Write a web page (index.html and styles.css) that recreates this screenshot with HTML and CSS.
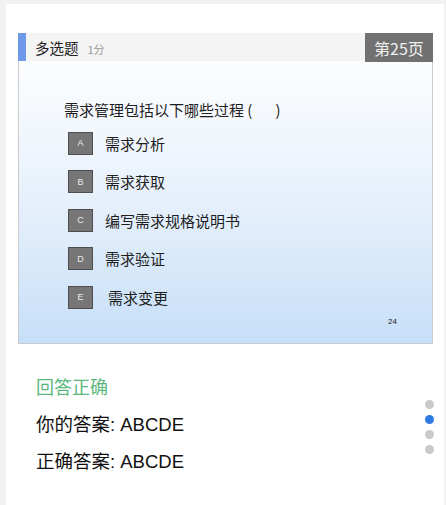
FILE: index.html
```html
<!DOCTYPE html>
<html lang="zh">
<head>
<meta charset="utf-8">
<link rel="stylesheet" href="styles.css">
</head>
<body>
<div class="card">
  <div class="slide">
    <div class="slide-head">
      <div class="head-title"><span class="type">多选题</span><span class="score">1分</span></div>
      <div class="page-badge">第25页</div>
    </div>
    <div class="slide-body">
      <div class="question">需求管理包括以下哪些过程 (<span class="blank"></span>)</div>
      <div class="options">
        <div class="option"><span class="letter">A</span><span class="opt-text">需求分析</span></div>
        <div class="option"><span class="letter">B</span><span class="opt-text">需求获取</span></div>
        <div class="option"><span class="letter">C</span><span class="opt-text">编写需求规格说明书</span></div>
        <div class="option"><span class="letter">D</span><span class="opt-text">需求验证</span></div>
        <div class="option"><span class="letter">E</span><span class="opt-text shift">需求变更</span></div>
      </div>
      <div class="slide-num">24</div>
    </div>
  </div>
  <div class="result">
    <div class="status">回答正确</div>
    <div class="answer">你的答案: ABCDE</div>
    <div class="answer second">正确答案: ABCDE</div>
  </div>
  <div class="dots">
    <span class="dot"></span>
    <span class="dot active"></span>
    <span class="dot"></span>
    <span class="dot"></span>
  </div>
</div>
</body>
</html>
```
FILE: styles.css
```css
html, body {
  margin: 0;
  padding: 0;
  height: 100%;
}
body {
  background: #f1f1f1;
  font-family: "Noto Sans CJK SC", "Liberation Sans", sans-serif;
  color: #1a1a1a;
  overflow: hidden;
}
.card {
  position: relative;
  background: #ffffff;
  margin: 4px 2px 0 6px;
  height: calc(100% - 4px);
  padding: 29px 11px 0 12px;
  box-sizing: border-box;
}
.slide {
  height: 311px;
  border: 1px solid #c9cbcf;
  box-sizing: border-box;
  display: flex;
  flex-direction: column;
  background: linear-gradient(to bottom, #ffffff 0%, #f5f9fd 25%, #e3eefb 60%, #c6dff8 100%);
}
.slide-head {
  height: 28px;
  display: flex;
  align-items: stretch;
  background: #f4f4f4;
  border-left: 8px solid #6e98e8;
  margin-left: -1px;
  margin-top: -1px;
  margin-right: -1px;
}
.head-title {
  flex: 1;
  display: flex;
  align-items: center;
  padding-left: 9px;
  gap: 9px;
}
.type {
  font-size: 14.5px;
  color: #222;
}
.score {
  font-size: 11px;
  color: #9a9a9a;
  padding-top: 3px;
}
.page-badge {
  width: 68px;
  background: #717171;
  color: #f0f0f0;
  font-size: 16px;
  display: flex;
  align-items: center;
  justify-content: center;
  height: 29px;
}
.slide-body {
  flex: 1;
  display: flex;
  flex-direction: column;
  padding: 39px 0 0 45px;
}
.question {
  font-size: 15px;
  line-height: 20px;
  color: #1e1e1e;
}
.blank {
  display: inline-block;
  width: 23px;
}
.options {
  display: flex;
  flex-direction: column;
  margin-top: 4px;
  padding-left: 4px;
}
.option {
  height: 38.5px;
  display: flex;
  align-items: center;
}
.letter {
  width: 23px;
  height: 21px;
  background: #767676;
  border: 1px solid #4e4e4e;
  color: #ececec;
  font-family: "Liberation Sans", sans-serif;
  font-size: 9px;
  display: flex;
  align-items: center;
  justify-content: center;
}
.opt-text {
  font-size: 15px;
  margin-left: 12px;
  color: #1e1e1e;
}
.opt-text.shift {
  margin-left: 15px;
}
.slide-num {
  align-self: flex-end;
  margin-right: 35px;
  font-family: "Liberation Sans", sans-serif;
  font-size: 8px;
  color: #222;
}
.result {
  padding: 30px 0 0 18px;
}
.status {
  font-size: 18px;
  line-height: 24px;
  color: #5bb87d;
}
.answer {
  font-size: 18.5px;
  line-height: 24px;
  margin-top: 15px;
  color: #111;
  font-family: "Liberation Sans", "Noto Sans CJK SC", sans-serif;
}
.answer.second {
  margin-top: 13px;
}
.dots {
  position: absolute;
  right: 10px;
  top: 396px;
  display: flex;
  flex-direction: column;
  gap: 6px;
}
.dot {
  width: 9px;
  height: 9px;
  border-radius: 50%;
  background: #c9c9c9;
}
.dot.active {
  background: #2e7be6;
}
```
